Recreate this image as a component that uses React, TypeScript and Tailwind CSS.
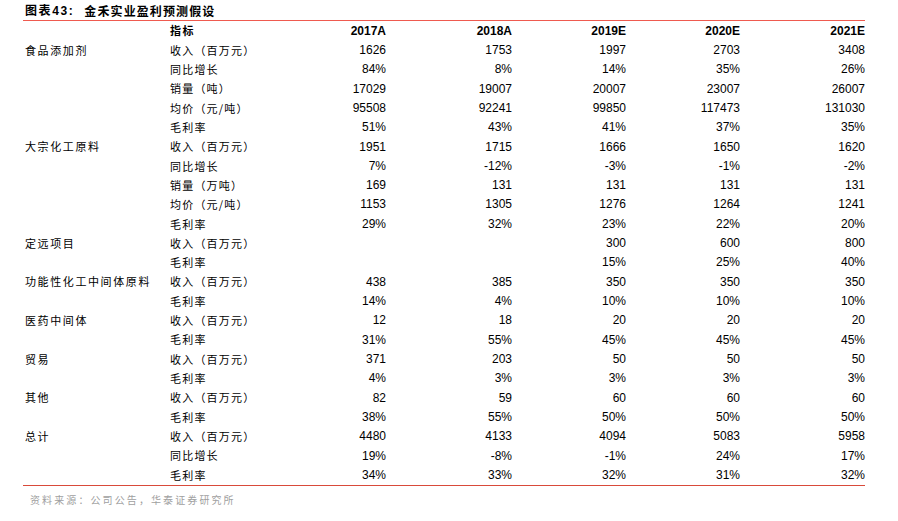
import React from 'react';

type Row = { seg?: string; item: string; vals: string[] };

const rows: Row[] = [
    { seg: '食品添加剂', item: '收入（百万元）', vals: ['1626', '1753', '1997', '2703', '3408'] },
    { item: '同比增长', vals: ['84%', '8%', '14%', '35%', '26%'] },
    { item: '销量（吨）', vals: ['17029', '19007', '20007', '23007', '26007'] },
    { item: '均价（元/吨）', vals: ['95508', '92241', '99850', '117473', '131030'] },
    { item: '毛利率', vals: ['51%', '43%', '41%', '37%', '35%'] },
    { seg: '大宗化工原料', item: '收入（百万元）', vals: ['1951', '1715', '1666', '1650', '1620'] },
    { item: '同比增长', vals: ['7%', '-12%', '-3%', '-1%', '-2%'] },
    { item: '销量（万吨）', vals: ['169', '131', '131', '131', '131'] },
    { item: '均价（元/吨）', vals: ['1153', '1305', '1276', '1264', '1241'] },
    { item: '毛利率', vals: ['29%', '32%', '23%', '22%', '20%'] },
    { seg: '定远项目', item: '收入（百万元）', vals: ['', '', '300', '600', '800'] },
    { item: '毛利率', vals: ['', '', '15%', '25%', '40%'] },
    { seg: '功能性化工中间体原料', item: '收入（百万元）', vals: ['438', '385', '350', '350', '350'] },
    { item: '毛利率', vals: ['14%', '4%', '10%', '10%', '10%'] },
    { seg: '医药中间体', item: '收入（百万元）', vals: ['12', '18', '20', '20', '20'] },
    { item: '毛利率', vals: ['31%', '55%', '45%', '45%', '45%'] },
    { seg: '贸易', item: '收入（百万元）', vals: ['371', '203', '50', '50', '50'] },
    { item: '毛利率', vals: ['4%', '3%', '3%', '3%', '3%'] },
    { seg: '其他', item: '收入（百万元）', vals: ['82', '59', '60', '60', '60'] },
    { item: '毛利率', vals: ['38%', '55%', '50%', '50%', '50%'] },
    { seg: '总计', item: '收入（百万元）', vals: ['4480', '4133', '4094', '5083', '5958'] },
    { item: '同比增长', vals: ['19%', '-8%', '-1%', '24%', '17%'] },
    { item: '毛利率', vals: ['34%', '33%', '32%', '31%', '32%'] },
];

const years = ['2017A', '2018A', '2019E', '2020E', '2021E'];

const grid = 'grid grid-cols-[145px_110px_106px_126px_114px_114px_125px] items-center h-[19.32px]';
const cjk = "font-['Noto_Sans_CJK_SC',sans-serif]";
const num = "font-['Liberation_Sans',Arial,sans-serif] text-[12px] text-right";

export default function App() {
    return (
        <div className="w-[898px] h-[521px] bg-white text-black">
            <div className="ml-[23px] w-[842px]">
                <div className="h-[21px] flex items-center pl-[2px] pt-[1px] border-b border-[#ef5a4f]">
                    <span className="font-['Liberation_Sans',Arial,sans-serif] font-bold text-[12px] tracking-[1.6px]">
                        <span className={cjk}>图表</span>43:
                    </span>
                    <span className={`${cjk} font-bold text-[12px] tracking-[1.1px] ml-[10px]`}>金禾实业盈利预测假设</span>
                </div>
                <div className="pl-[2px] border-b border-[#d94a3a]">
                    <div className={`${grid} h-[19.5px]`}>
                        <div />
                        <div className={`${cjk} font-bold text-[11px] tracking-[1.5px]`}>指标</div>
                        {years.map(y => (
                            <div key={y} className={`${num} font-bold`}>{y}</div>
                        ))}
                    </div>
                    {rows.map((r, i) => (
                        <div key={i} className={grid}>
                            <div className={`${cjk} text-[11px] tracking-[1.6px] whitespace-nowrap`}>{r.seg ?? ''}</div>
                            <div className={`${cjk} text-[11px] tracking-[1.2px] whitespace-nowrap`}>{r.item}</div>
                            {r.vals.map((v, j) => (
                                <div key={j} className={num}>{v}</div>
                            ))}
                        </div>
                    ))}
                </div>
                <div className={`${cjk} text-[10px] tracking-[2.1px] text-[#a0a0a0] pl-[7px] mt-[6px]`}>
                    资料来源：公司公告，华泰证券研究所
                </div>
            </div>
        </div>
    );
}
